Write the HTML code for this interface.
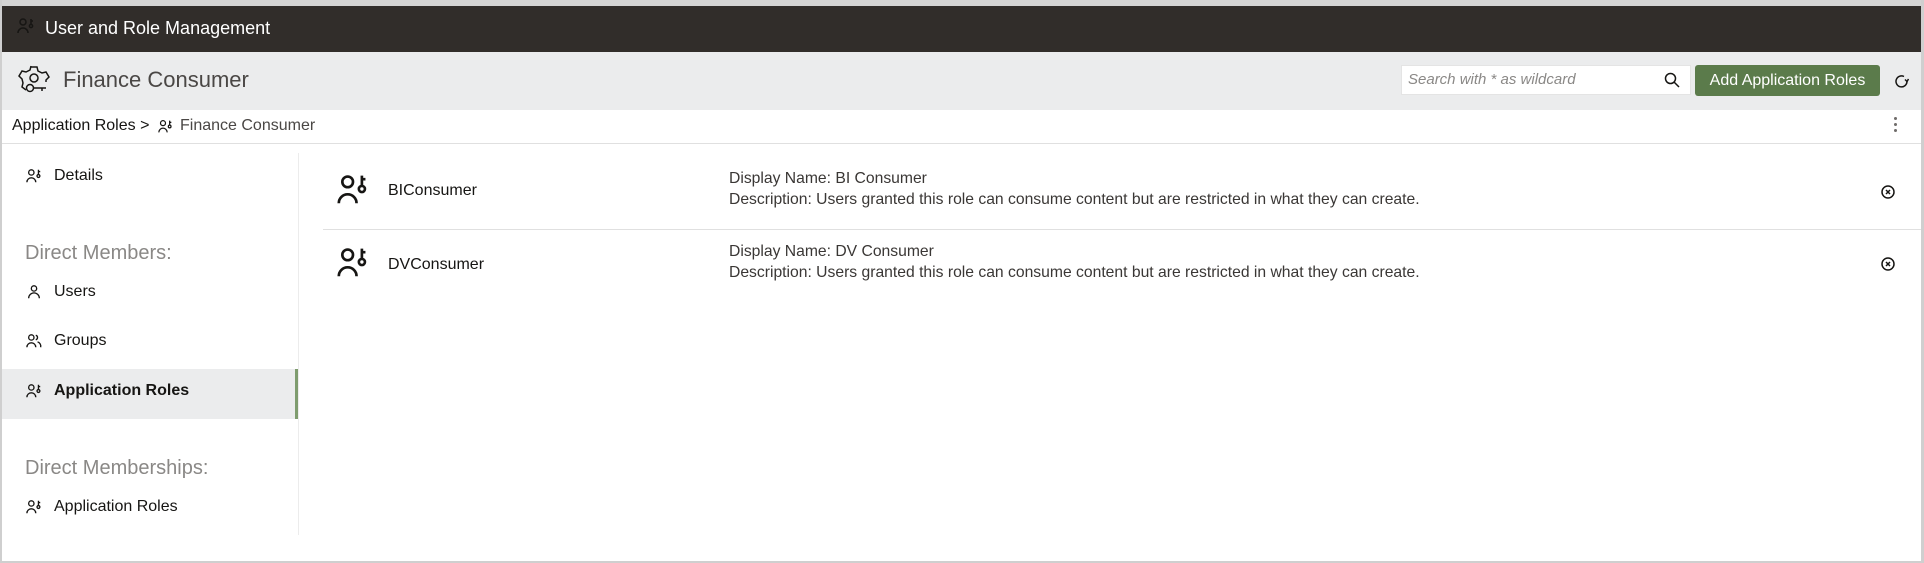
<!DOCTYPE html>
<html><head><meta charset="utf-8"><style>
*{margin:0;padding:0;box-sizing:border-box}
body{width:1924px;height:563px;overflow:hidden;background:#fff;font-family:"Liberation Sans",sans-serif;color:#161513;position:relative}
.a{position:absolute;white-space:nowrap}
svg{position:absolute;fill:none;stroke:#161513;stroke-width:1.5}
</style></head><body>
<div class="a" style="left:0;top:0;width:1924px;height:6px;background:#d4d4d4"></div>
<div class="a" style="left:0;top:0;width:2px;height:563px;background:#cfcfcf"></div>
<div class="a" style="left:1921px;top:0;width:3px;height:563px;background:#cfcfcf"></div>
<div class="a" style="left:0;top:561px;width:1924px;height:2px;background:#cfcfcf"></div>
<div class="a" style="left:2px;top:6px;width:1919px;height:46px;background:#312d2a"></div>
<svg style="left:17px;top:17px" width="18" height="18" viewBox="0 0 18 18" stroke="#fff"><circle cx="6" cy="5" r="3"/><path d="M1 16a5 5 0 0 1 10 0"/><circle cx="14" cy="9" r="1.6"/><path d="M14 2v5.5M14 4h2"/></svg>
<div class="a" style="left:45px;top:18px;font-size:18px;color:#fff">User and Role Management</div>
<div class="a" style="left:2px;top:52px;width:1919px;height:58px;background:#ebeced"></div>
<svg style="left:18px;top:64px" width="32" height="32" viewBox="0 0 32 32" stroke-width="2.2"><path d="M13 3h6l1 4 4 2 4-1 3 5-3 3v2M8 26l-4-3 1-4-1-4-3-3 3-5 4 1 4-2 1-4"/><circle cx="16" cy="14" r="4"/><circle cx="12" cy="24" r="3.5"/><path d="M15.5 24H28M24 24v3"/></svg>
<div class="a" style="left:63px;top:67px;font-size:22px;color:#4a4745">Finance Consumer</div>
<div class="a" style="left:1401px;top:65px;width:290px;height:30px;background:#fff;border:1px solid #e4e4e4"></div>
<div class="a" style="left:1408px;top:71px;font-size:15px;font-style:italic;color:#8a8886">Search with * as wildcard</div>
<svg style="left:1664px;top:72px" width="16" height="16" viewBox="0 0 16 16" stroke="#6f6c6a" stroke-width="1.3"><circle cx="6.5" cy="6.5" r="5"/><path d="M10 10l5 5"/></svg>
<div class="a" style="left:1695px;top:65px;width:185px;height:31px;background:#5b7b4b;border-radius:3px;color:#fff;font-size:16px;text-align:center;line-height:31px">Add Application Roles</div>
<svg style="left:1894px;top:74px" width="15" height="15" viewBox="0 0 15 15" stroke="#8a8886" stroke-width="1.4"><path d="M13 7.5A5.5 5.5 0 1 1 10 2.5"/><path d="M13 7.5l-2-2M13 7.5l1.5-2.5"/></svg>
<div class="a" style="left:12px;top:117px;font-size:16px">Application Roles &gt;</div>
<svg style="left:158px;top:119px" width="15" height="15" viewBox="0 0 18 18"><circle cx="6" cy="5" r="3"/><path d="M1 16a5 5 0 0 1 10 0"/><circle cx="14" cy="9" r="1.6"/><path d="M14 2v5.5M14 4h2"/></svg>
<div class="a" style="left:180px;top:117px;font-size:16px;color:#4a4745">Finance Consumer</div>
<div class="a" style="left:1894px;top:117px;width:3px;height:3px;border-radius:2px;background:#6f6c6a;box-shadow:0 6px 0 #6f6c6a,0 12px 0 #6f6c6a"></div>
<div class="a" style="left:2px;top:143px;width:1919px;height:1px;background:#e0e0e0"></div>
<div class="a" style="left:298px;top:153px;width:1px;height:382px;background:#ececec"></div>
<svg style="left:26px;top:168px" width="16" height="16" viewBox="0 0 18 18"><circle cx="6" cy="5" r="3"/><path d="M1 16a5 5 0 0 1 10 0"/><circle cx="14" cy="9" r="1.6"/><path d="M14 2v5.5M14 4h2"/></svg>
<div class="a" style="left:54px;top:167px;font-size:16px">Details</div>
<div class="a" style="left:25px;top:242px;font-size:20px;color:#8a8886">Direct Members:</div>
<svg style="left:26px;top:284px" width="16" height="16" viewBox="0 0 18 18"><circle cx="9" cy="5" r="3"/><path d="M3 16a6 6 0 0 1 12 0"/></svg>
<div class="a" style="left:54px;top:283px;font-size:16px">Users</div>
<svg style="left:26px;top:333px" width="16" height="16" viewBox="0 0 18 18"><circle cx="6" cy="5" r="3"/><path d="M1 16a5 5 0 0 1 10 0M11 2.5a2.7 2.7 0 0 1 0 5.2M13 10a5 5 0 0 1 3.5 6"/></svg>
<div class="a" style="left:54px;top:332px;font-size:16px">Groups</div>
<div class="a" style="left:2px;top:369px;width:296px;height:50px;background:#ebeced"></div>
<div class="a" style="left:295px;top:369px;width:3px;height:50px;background:#7e9c6e"></div>
<svg style="left:26px;top:383px" width="16" height="16" viewBox="0 0 18 18"><circle cx="6" cy="5" r="3"/><path d="M1 16a5 5 0 0 1 10 0"/><circle cx="14" cy="9" r="1.6"/><path d="M14 2v5.5M14 4h2"/></svg>
<div class="a" style="left:54px;top:382px;font-size:16px;font-weight:bold">Application Roles</div>
<div class="a" style="left:25px;top:457px;font-size:20px;color:#8a8886">Direct Memberships:</div>
<svg style="left:26px;top:499px" width="16" height="16" viewBox="0 0 18 18"><circle cx="6" cy="5" r="3"/><path d="M1 16a5 5 0 0 1 10 0"/><circle cx="14" cy="9" r="1.6"/><path d="M14 2v5.5M14 4h2"/></svg>
<div class="a" style="left:54px;top:498px;font-size:16px">Application Roles</div>
<svg style="left:337px;top:173px" width="32" height="32" viewBox="0 0 18 18" stroke-width="1.3"><circle cx="6" cy="5" r="3"/><path d="M1 17a5 5 0 0 1 10 0"/><circle cx="14" cy="9" r="1.7"/><path d="M14 1.5v5.8M14 3.5h2"/></svg>
<div class="a" style="left:388px;top:182px;font-size:16px">BIConsumer</div>
<div class="a" style="left:729px;top:170px;font-size:15.7px;color:#3a3735">Display Name: BI Consumer</div>
<div class="a" style="left:729px;top:191px;font-size:15.7px;color:#3a3735">Description: Users granted this role can consume content but are restricted in what they can create.</div>
<svg style="left:1881px;top:185px" width="14" height="14" viewBox="0 0 14 14" stroke="#6f6c6a" stroke-width="1.1"><circle cx="7" cy="7" r="6"/><path d="M5 5l4 4M9 5l-4 4"/></svg>
<div class="a" style="left:323px;top:229px;width:1598px;height:1px;background:#e0e0e0"></div>
<svg style="left:337px;top:246px" width="32" height="32" viewBox="0 0 18 18" stroke-width="1.3"><circle cx="6" cy="5" r="3"/><path d="M1 17a5 5 0 0 1 10 0"/><circle cx="14" cy="9" r="1.7"/><path d="M14 1.5v5.8M14 3.5h2"/></svg>
<div class="a" style="left:388px;top:256px;font-size:16px">DVConsumer</div>
<div class="a" style="left:729px;top:243px;font-size:15.7px;color:#3a3735">Display Name: DV Consumer</div>
<div class="a" style="left:729px;top:264px;font-size:15.7px;color:#3a3735">Description: Users granted this role can consume content but are restricted in what they can create.</div>
<svg style="left:1881px;top:257px" width="14" height="14" viewBox="0 0 14 14" stroke="#6f6c6a" stroke-width="1.1"><circle cx="7" cy="7" r="6"/><path d="M5 5l4 4M9 5l-4 4"/></svg>
</body></html>
